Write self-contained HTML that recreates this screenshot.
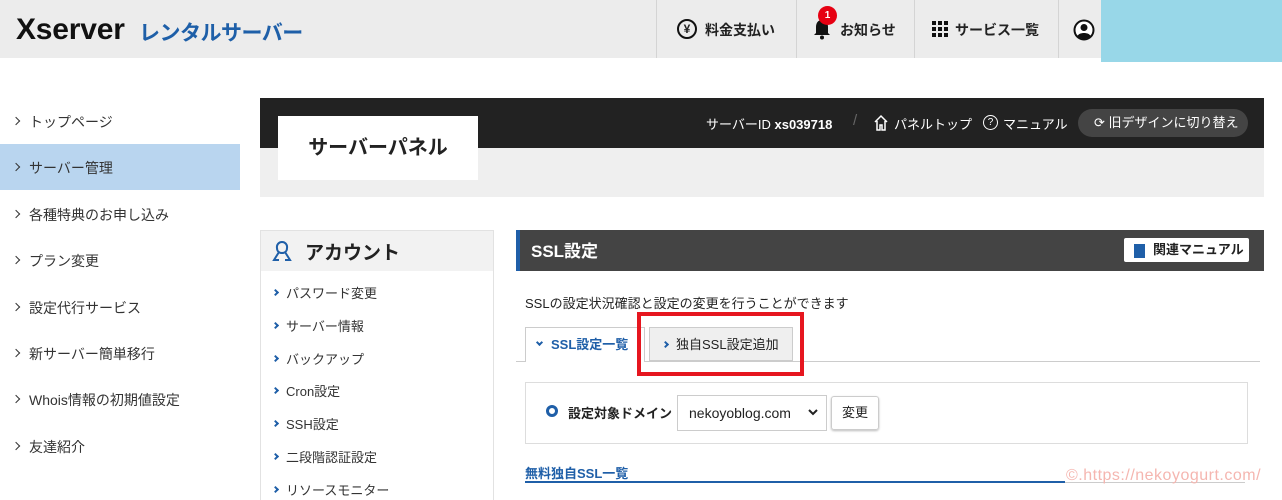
<!DOCTYPE html>
<html><head><meta charset="utf-8"><style>
*{margin:0;padding:0;box-sizing:border-box}
body{width:1282px;height:493px;overflow:hidden;background:#fff;font-family:"Liberation Sans","Noto Sans CJK JP",sans-serif;color:#222;position:relative}
.a{position:absolute;white-space:nowrap}
.chev{display:inline-block;width:6px;height:6px;border-right:1.6px solid #333;border-top:1.6px solid #333;transform:rotate(45deg);margin-right:10px;vertical-align:middle;position:relative;top:-2px}
.side{font-size:14px;color:#333;left:13px}
.acc{font-size:13px;color:#333;left:273px}
.acc .chev{width:5px;height:5px;border-color:#1f5fa8;border-width:2px;margin-right:8px}
.nav{font-size:14px;font-weight:bold;color:#222;top:20px}
.sep{position:absolute;top:0;width:1px;height:58px;background:#d4d4d4}
</style></head><body>
<div class="a" style="left:0;top:0;width:1282px;height:58px;background:#ececec"></div>
<div class="a" style="left:16px;top:13px;font-size:30px;font-weight:bold;letter-spacing:-0.2px;color:#111">Xserver</div>
<div class="a" style="left:139px;top:17px;font-size:21px;font-weight:bold;color:#1e5fa8;letter-spacing:-0.5px">レンタルサーバー</div>
<div class="sep" style="left:656px"></div><div class="sep" style="left:796px"></div><div class="sep" style="left:914px"></div><div class="sep" style="left:1058px"></div>
<div class="a" style="left:677px;top:19px;width:20px;height:20px;border:2px solid #111;border-radius:50%;font-size:12px;font-weight:bold;text-align:center;line-height:16px">¥</div>
<div class="a nav" style="left:705px">料金支払い</div>
<svg class="a" style="left:812px;top:18px" width="20" height="22" viewBox="0 0 20 22"><path d="M10 2C6 2 4 5 4 9v6l-2 2h16l-2-2V9c0-4-2-7-6-7z" fill="#111"/><circle cx="10" cy="19.5" r="2" fill="#111"/></svg>
<div class="a" style="left:818px;top:6px;width:19px;height:19px;border-radius:50%;background:#e60012;color:#fff;font-size:10px;font-weight:bold;text-align:center;line-height:19px">1</div>
<div class="a nav" style="left:840px">お知らせ</div>
<svg class="a" style="left:932px;top:21px" width="16" height="16"><g fill="#111"><rect x="0" y="0" width="4" height="4"/><rect x="6" y="0" width="4" height="4"/><rect x="12" y="0" width="4" height="4"/><rect x="0" y="6" width="4" height="4"/><rect x="6" y="6" width="4" height="4"/><rect x="12" y="6" width="4" height="4"/><rect x="0" y="12" width="4" height="4"/><rect x="6" y="12" width="4" height="4"/><rect x="12" y="12" width="4" height="4"/></g></svg>
<div class="a nav" style="left:955px">サービス一覧</div>
<svg class="a" style="left:1073px;top:19px" width="22" height="22" viewBox="0 0 22 22"><circle cx="11" cy="11" r="9.5" fill="#fff" stroke="#111" stroke-width="2"/><circle cx="11" cy="8.5" r="3.5" fill="#111"/><path d="M4.5 17c1.5-4 11.5-4 13 0c-3 3.5-10 3.5-13 0z" fill="#111"/></svg>
<div class="a" style="left:1101px;top:0;width:181px;height:62px;background:#98d7e8"></div>

<div class="a" style="left:0;top:144px;width:240px;height:46px;background:#b9d5ef"></div>
<div class="a side" style="top:112px"><span class="chev"></span>トップページ</div>
<div class="a side" style="top:158px"><span class="chev"></span>サーバー管理</div>
<div class="a side" style="top:205px"><span class="chev"></span>各種特典のお申し込み</div>
<div class="a side" style="top:251px"><span class="chev"></span>プラン変更</div>
<div class="a side" style="top:298px"><span class="chev"></span>設定代行サービス</div>
<div class="a side" style="top:344px"><span class="chev"></span>新サーバー簡単移行</div>
<div class="a side" style="top:390px"><span class="chev"></span>Whois情報の初期値設定</div>
<div class="a side" style="top:437px"><span class="chev"></span>友達紹介</div>

<div class="a" style="left:260px;top:98px;width:1004px;height:50px;background:#222"></div>
<div class="a" style="left:260px;top:148px;width:1004px;height:49px;background:#efefef"></div>
<div class="a" style="left:278px;top:116px;width:200px;height:64px;background:#fff;font-size:20px;font-weight:bold;text-align:center;line-height:64px;color:#222">サーバーパネル</div>
<div class="a" style="left:706px;top:114px;font-size:13px;color:#fff">サーバーID <b>xs039718</b></div>
<div class="a" style="left:853px;top:112px;font-size:15px;color:#666">/</div>
<svg class="a" style="left:873px;top:114px" width="16" height="17" viewBox="0 0 16 17"><path d="M2 8L8 2l6 6M4 7v9h3v-5h2v5h3V7" fill="none" stroke="#fff" stroke-width="1.5"/></svg>
<div class="a" style="left:894px;top:114px;font-size:13px;color:#fff">パネルトップ</div>
<div class="a" style="left:983px;top:115px;width:15px;height:15px;border:1.3px solid #fff;border-radius:50%;color:#fff;font-size:10px;text-align:center;line-height:13px">?</div>
<div class="a" style="left:1003px;top:114px;font-size:13px;color:#fff">マニュアル</div>
<div class="a" style="left:1078px;top:109px;width:170px;height:28px;border-radius:14px;background:#444;color:#fff;font-size:13px;line-height:28px;padding-left:16px">⟳ 旧デザインに切り替え</div>

<div class="a" style="left:260px;top:230px;width:234px;height:270px;border:1px solid #e2e2e2;border-bottom:none"></div>
<div class="a" style="left:261px;top:231px;width:232px;height:40px;background:#f2f2f2"></div>
<svg class="a" style="left:272px;top:240px" width="20" height="22" viewBox="0 0 20 22"><path d="M10 2a5 5 0 0 0-5 6c0 3 2 5 5 5s5-2 5-5a5 5 0 0 0-5-6zM7 12l-5 8h5M13 12l5 8h-5" fill="none" stroke="#1f5fa8" stroke-width="2"/></svg>
<div class="a" style="left:305px;top:238px;font-size:19px;font-weight:bold;color:#222">アカウント</div>
<div class="a acc" style="top:283px"><span class="chev"></span>パスワード変更</div>
<div class="a acc" style="top:316px"><span class="chev"></span>サーバー情報</div>
<div class="a acc" style="top:349px"><span class="chev"></span>バックアップ</div>
<div class="a acc" style="top:381px"><span class="chev"></span>Cron設定</div>
<div class="a acc" style="top:414px"><span class="chev"></span>SSH設定</div>
<div class="a acc" style="top:447px"><span class="chev"></span>二段階認証設定</div>
<div class="a acc" style="top:480px"><span class="chev"></span>リソースモニター</div>

<div class="a" style="left:516px;top:230px;width:748px;height:41px;background:#444;border-left:4px solid #1f5fa8"></div>
<div class="a" style="left:531px;top:237px;font-size:17px;font-weight:bold;color:#fff">SSL設定</div>
<div class="a" style="left:1124px;top:238px;width:125px;height:24px;background:#fff;border-radius:2px;font-size:13px;font-weight:bold;line-height:24px;padding-left:29px">関連マニュアル</div>
<div class="a" style="left:1134px;top:244px;width:11px;height:14px;background:#1f5fa8"></div>
<div class="a" style="left:525px;top:293px;font-size:13px;color:#222">SSLの設定状況確認と設定の変更を行うことができます</div>
<div class="a" style="left:516px;top:361px;width:744px;height:1px;background:#ccc"></div>
<div class="a" style="left:525px;top:327px;width:120px;height:35px;background:#fff;border:1px solid #ccc;border-bottom:none"></div>
<div class="a" style="left:537px;top:334px;font-size:13px;font-weight:bold;color:#1f5fa8"><span style="display:inline-block;width:5px;height:5px;border-right:2px solid #1f5fa8;border-bottom:2px solid #1f5fa8;transform:rotate(45deg);margin-right:9px;position:relative;top:-4px"></span>SSL設定一覧</div>
<div class="a" style="left:649px;top:327px;width:144px;height:34px;background:#efefef;border:1px solid #ccc"></div>
<div class="a" style="left:663px;top:334px;font-size:13px;color:#222"><span style="display:inline-block;width:5px;height:5px;border-right:2px solid #1f5fa8;border-top:2px solid #1f5fa8;transform:rotate(45deg);margin-right:8px;position:relative;top:-2px"></span>独自SSL設定追加</div>
<div class="a" style="left:637px;top:312px;width:167px;height:64px;border:4px solid #e6161f"></div>

<div class="a" style="left:525px;top:382px;width:723px;height:62px;border:1px solid #ddd"></div>
<div class="a" style="left:546px;top:405px;width:12px;height:12px;border:3px solid #1f5fa8;border-radius:50%"></div>
<div class="a" style="left:568px;top:403px;font-size:13px;font-weight:bold">設定対象ドメイン</div>
<div class="a" style="left:677px;top:395px;width:150px;height:36px;border:1px solid #ccc;font-size:14px;line-height:34px;padding-left:11px;color:#222">nekoyoblog.com</div>
<svg class="a" style="left:808px;top:408px" width="10" height="8" viewBox="0 0 10 8"><path d="M1 2l4 4 4-4" fill="none" stroke="#222" stroke-width="2"/></svg>
<div class="a" style="left:831px;top:396px;width:48px;height:34px;border:1px solid #ccc;border-radius:3px;box-shadow:0 1px 2px #bbb;font-size:13px;text-align:center;line-height:32px">変更</div>
<div class="a" style="left:525px;top:463px;font-size:13px;font-weight:bold;color:#1f5fa8">無料独自SSL一覧</div>
<div class="a" style="left:525px;top:481px;width:540px;height:2px;background:#1f5fa8"></div>
<div class="a" style="left:1065px;top:482px;width:180px;height:1px;background:#ccc"></div>
<div class="a" style="left:1066px;top:467px;font-size:16px;color:#f5b6b0;letter-spacing:0.5px">©.https://nekoyogurt.com/</div>
</body></html>
